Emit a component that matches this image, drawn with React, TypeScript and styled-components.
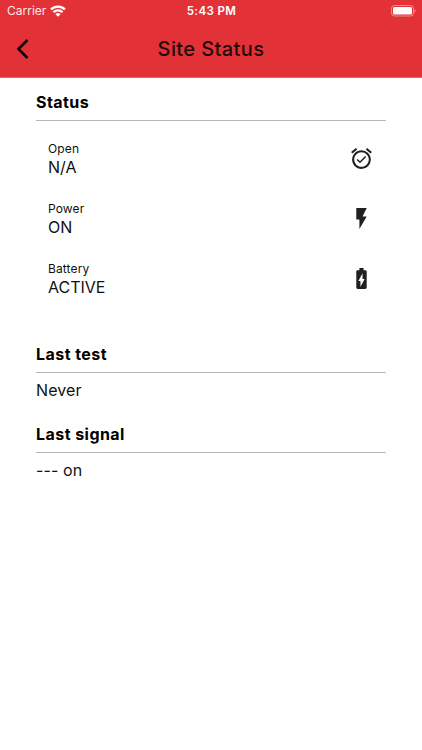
import React from "react";
import styled, { createGlobalStyle } from "styled-components";
import { MdAlarmOn, MdFlashOn, MdBatteryChargingFull } from "react-icons/md";

const GlobalStyle = createGlobalStyle`
  * { box-sizing: border-box; }
  body { margin: 0; background: #fff; color: #111; font-family: Inter, "Liberation Sans", sans-serif; }
`;

const Screen = styled.div`
  width: 422px;
  height: 750px;
  overflow: hidden;
`;
const Header = styled.header`
  height: 78px;
  background: #e23237;
  border-bottom: 1px solid #e8666a;
`;
const StatusBar = styled.div`
  height: 20px;
  display: grid;
  grid-template-columns: 1fr auto 1fr;
  align-items: center;
  padding: 1px 6px 0 7px;
  color: #fff;
  font-size: 12px;
`;
const Carrier = styled.div`
  display: flex;
  align-items: center;
  gap: 4px;
  color: #fde9e9;
`;
const Clock = styled.div`
  font-weight: 600;
  font-size: 11.5px;
  letter-spacing: 0.4px;
`;
const BatteryGauge = styled.svg`
  justify-self: end;
`;
const NavBar = styled.div`
  height: 57px;
  display: grid;
  grid-template-columns: 46px 1fr 46px;
  align-items: center;
  justify-items: center;
`;
const Title = styled.h1`
  margin: 0;
  font-size: 20px;
  font-weight: 500;
  letter-spacing: 0.4px;
  color: #240a0b;
`;
const Content = styled.main`
  padding: 13px 36px;
`;
const Section = styled.section<{ $space: number }>`
  margin-bottom: ${(p) => p.$space}px;
`;
const Heading = styled.h2`
  margin: 0;
  height: 30px;
  border-bottom: 1px solid #b5b6b8;
  font-size: 16px;
  line-height: 22px;
  font-weight: 700;
  letter-spacing: 0.45px;
  color: #000;
`;
const Row = styled.div`
  height: 60px;
  padding: 0 12px;
  display: flex;
  align-items: center;
  justify-content: space-between;
`;
const RowIcon = styled.div`
  display: flex;
  padding-bottom: 2px;
  color: #202020;
`;
const Label = styled.div`
  padding-top: 1px;
  font-size: 12px;
  line-height: 16px;
  letter-spacing: 0.12px;
`;
const Value = styled.div`
  font-size: 16px;
  line-height: 21px;
`;
const Rows = styled.div`
  padding-top: 8px;
`;
const Body = styled.div`
  padding-top: 6px;
  font-size: 16px;
  line-height: 22px;
  letter-spacing: 0.1px;
`;

const rows = [
  { label: "Open", value: "N/A", Icon: MdAlarmOn },
  { label: "Power", value: "ON", Icon: MdFlashOn },
  { label: "Battery", value: "ACTIVE", Icon: MdBatteryChargingFull },
];

export default function App() {
  return (
    <Screen>
      <GlobalStyle />
      <Header>
        <StatusBar>
          <Carrier>
            Carrier
            <svg width="16" height="12" viewBox="0 0 16 12" fill="none" stroke="#fff" strokeWidth="2.2">
              <path d="M1 4.4a10 10 0 0 1 14 0M3.4 7.2a6.5 6.5 0 0 1 9.2 0" />
              <path d="M8 11.8 5.4 9.2a3.7 3.7 0 0 1 5.2 0z" fill="#fff" stroke="none" />
            </svg>
          </Carrier>
          <Clock>5:43 PM</Clock>
          <BatteryGauge width="25" height="12" viewBox="0 0 25 12">
            <rect x="0.5" y="0.5" width="22" height="10.5" rx="3" fill="none" stroke="#fff" strokeOpacity="0.45" />
            <rect x="2" y="2" width="19" height="7.5" rx="1.6" fill="#fff" />
            <path d="M23.6 4v3.6c1.3-.5 1.3-3.1 0-3.6z" fill="#fff" fillOpacity="0.6" />
          </BatteryGauge>
        </StatusBar>
        <NavBar>
          <svg width="14" height="22" viewBox="0 0 14 22" fill="none" stroke="#140304" strokeWidth="2.6">
            <path d="M11.5 2 2.5 11l9 9" />
          </svg>
          <Title>Site Status</Title>
        </NavBar>
      </Header>
      <Content>
        <Section $space={34}>
          <Heading>Status</Heading>
          <Rows>
            {rows.map(({ label, value, Icon }) => (
              <Row key={label}>
                <div>
                  <Label>{label}</Label>
                  <Value>{value}</Value>
                </div>
                <RowIcon>
                  <Icon size={25} />
                </RowIcon>
              </Row>
            ))}
          </Rows>
        </Section>
        <Section $space={22}>
          <Heading>Last test</Heading>
          <Body>Never</Body>
        </Section>
        <Section $space={0}>
          <Heading>Last signal</Heading>
          <Body>--- on</Body>
        </Section>
      </Content>
    </Screen>
  );
}
